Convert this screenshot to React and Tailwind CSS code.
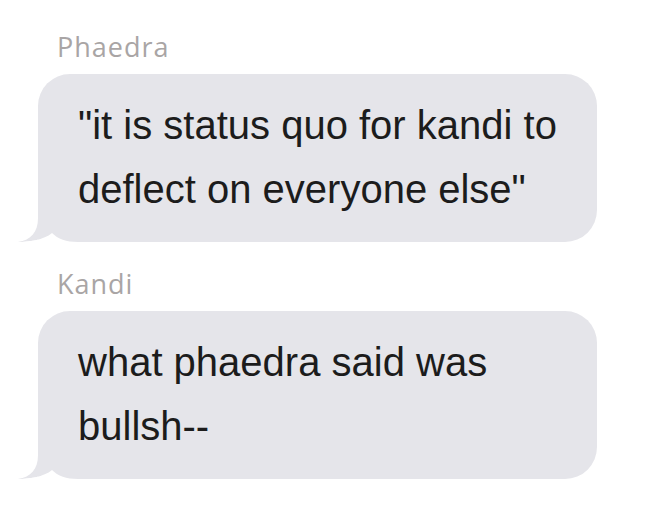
import React from 'react'

const MESSAGES = [
  { name: 'Phaedra', text: '"it is status quo for kandi to deflect on everyone else"' },
  { name: 'Kandi', text: 'what phaedra said was bullsh--' },
]

// iMessage-style tail at the bottom-left corner of a bubble
function Tail() {
  return (
    <svg
      className="absolute left-[-20px] bottom-0"
      width="60"
      height="40"
      viewBox="0 0 60 40"
    >
      <path d="M20,0 L20,16 C20,30 13,38 0,40 C10,40 26,38 34,31 L34,0 Z" fill="#e5e5ea" />
      <path d="M0,40 C10,40 26,38 34,31 C40,37 48,40 60,40 Z" fill="#ffffff" />
    </svg>
  )
}

function Message({ name, text }) {
  return (
    <div className="flex flex-col">
      <div className="ml-[19px] mb-[11px] text-[27px] leading-[32px] tracking-[1px] text-[#a9a5a5] font-['Open_Sans',sans-serif]">
        {name}
      </div>
      <div className="relative w-[559px] rounded-[32px] rounded-bl-none bg-[#e5e5ea] pl-[40px] pr-[24px] pt-[19px] pb-[21px]">
        <Tail />
        <p className="relative text-[40px] leading-[64px] text-[#1c1c1c] font-['Liberation_Sans',Arial,sans-serif]">
          {text}
        </p>
      </div>
    </div>
  )
}

export default function App() {
  return (
    <div className="w-[668px] h-[516px] bg-white pl-[38px] pt-[31px] flex flex-col gap-[26px]">
      {MESSAGES.map((m) => (
        <Message key={m.name} {...m} />
      ))}
    </div>
  )
}
